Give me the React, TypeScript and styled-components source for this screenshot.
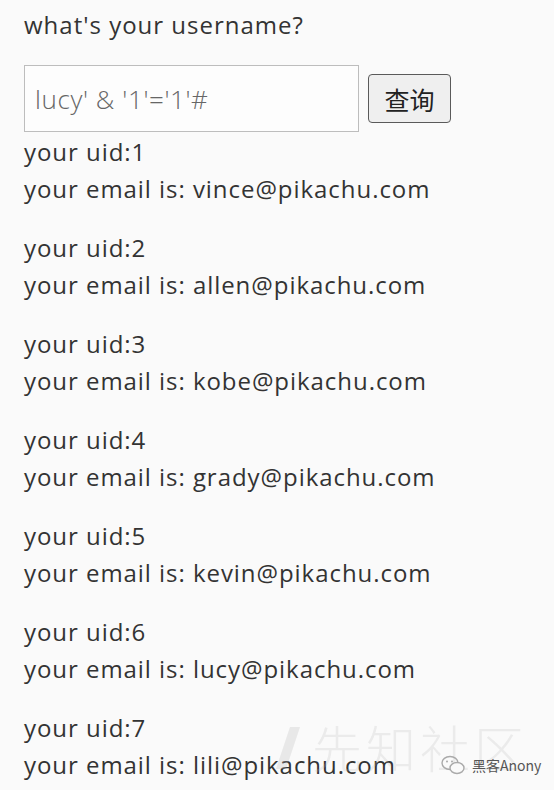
import React from "react";
import styled, { createGlobalStyle } from "styled-components";

const Global = createGlobalStyle`
  html, body { margin: 0; padding: 0; background: #fafafa; }
  body { font-family: "Open Sans", "Noto Sans CJK SC", sans-serif; color: #333; }
`;

const Page = styled.div`
  position: relative;
  width: 554px;
  height: 790px;
  overflow: hidden;
  padding: 6px 0 0 24px;
  box-sizing: border-box;
  background: #fafafa;
`;

const Title = styled.div`
  font-size: 24px;
  line-height: 37px;
  letter-spacing: 1px;
  color: #333;
`;

const Form = styled.div`
  display: flex;
  align-items: center;
  gap: 9px;
  margin-top: 22px;
`;

const Input = styled.div`
  box-sizing: border-box;
  width: 335px;
  height: 67px;
  border: 1px solid #bdbdbd;
  background: #fdfdfd;
  display: flex;
  align-items: center;
  padding-left: 10px;
  font-size: 26px;
  letter-spacing: 0.6px;
  color: #666;
  font-weight: 300;
`;

const Button = styled.div`
  box-sizing: border-box;
  width: 83px;
  height: 49px;
  border: 1px solid #5a5a5a;
  border-radius: 4px;
  background: #efefef;
  display: flex;
  align-items: center;
  justify-content: center;
  font-family: "Noto Sans CJK SC", sans-serif;
  font-size: 25px;
  color: #222;
`;

const Results = styled.div`
  margin-top: 1px;
`;

const Block = styled.div`
  font-size: 24px;
  line-height: 37px;
  letter-spacing: 0.95px;
  margin-bottom: 22px;
  color: #333;
`;

const Watermark = styled.div`
  position: absolute;
  left: 272px;
  top: 710px;
  display: flex;
  align-items: center;
  gap: 10px;
  font-family: "Noto Sans CJK SC", sans-serif;
  font-size: 50px;
  font-weight: 300;
  color: rgba(180, 180, 180, 0.22);
  letter-spacing: 4px;
  pointer-events: none;
`;

const Tag = styled.div`
  position: absolute;
  left: 440px;
  top: 754px;
  display: flex;
  align-items: center;
  gap: 6px;
  font-family: "Noto Sans CJK SC", sans-serif;
  font-size: 14px;
  color: #555;
`;

const users = ["vince", "allen", "kobe", "grady", "kevin", "lucy", "lili"];

export default function App() {
  return (
    <>
      <Global />
      <Page>
        <Title>what's your username?</Title>
        <Form>
          <Input>lucy' &amp; '1'='1'#</Input>
          <Button>查询</Button>
        </Form>
        <Results>
          {users.map((u, i) => (
            <Block key={u}>
              your uid:{i + 1}
              <br />
              your email is: {u}@pikachu.com
            </Block>
          ))}
        </Results>
        <Watermark>
          <svg width="30" height="50" viewBox="0 0 30 50">
            <path d="M4 48 L18 6 L28 6 L14 48 Z" fill="rgba(180,180,180,0.25)" />
          </svg>
          先知社区
        </Watermark>
        <Tag>
          <svg width="26" height="22" viewBox="0 0 26 22">
            <ellipse cx="10" cy="9" rx="8" ry="6.5" fill="none" stroke="#aaa" strokeWidth="1.4" />
            <ellipse cx="17" cy="14" rx="7" ry="5.5" fill="#fafafa" stroke="#aaa" strokeWidth="1.4" />
            <circle cx="7" cy="7.5" r="1" fill="#aaa" />
            <circle cx="12" cy="7.5" r="1" fill="#aaa" />
          </svg>
          黑客Anony
        </Tag>
      </Page>
    </>
  );
}
